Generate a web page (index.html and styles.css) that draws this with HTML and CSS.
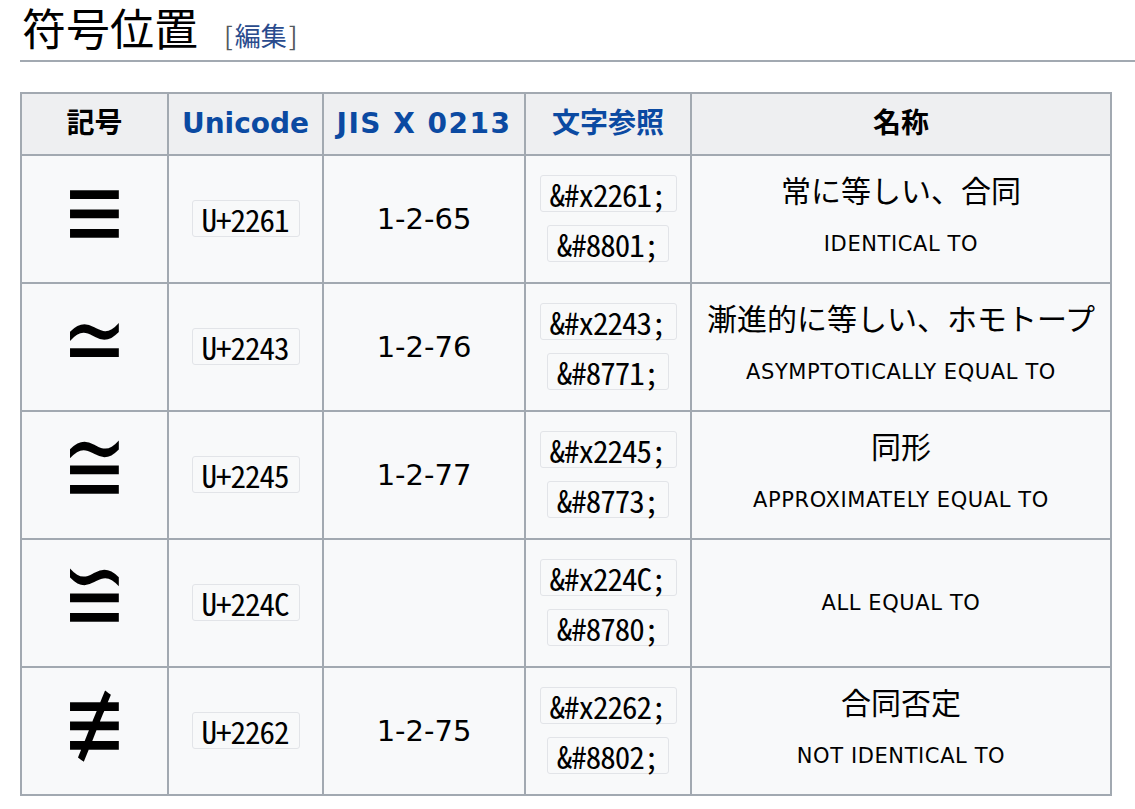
FILE: index.html
```html
<!DOCTYPE html>
<html lang="ja">
<head>
<meta charset="utf-8">
<title>符号位置</title>
<link rel="stylesheet" href="styles.css">
</head>
<body>
<div class="page">
  <h2 class="section-title"><span class="headline">符号位置</span><span class="editsection"><span class="bracket">[</span><a href="#">編集</a><span class="bracket">]</span></span></h2>
  <table class="wikitable">
    <colgroup>
      <col class="c1"><col class="c2"><col class="c3"><col class="c4"><col class="c5">
    </colgroup>
    <thead>
      <tr>
        <th>記号</th>
        <th><a href="#">Unicode</a></th>
        <th><a href="#" class="wide">JIS X 0213</a></th>
        <th><a href="#">文字参照</a></th>
        <th>名称</th>
      </tr>
    </thead>
    <tbody>
      <tr>
        <td class="sym"><span class="glyph">≡</span></td>
        <td class="uni"><code>U+2261</code></td>
        <td class="jis">1-2-65</td>
        <td class="refs"><code>&amp;#x2261;</code><br><code>&amp;#8801;</code></td>
        <td class="name"><div class="jp">常に等しい、合同</div><div class="en">IDENTICAL TO</div></td>
      </tr>
      <tr>
        <td class="sym"><span class="glyph">≃</span></td>
        <td class="uni"><code>U+2243</code></td>
        <td class="jis">1-2-76</td>
        <td class="refs"><code>&amp;#x2243;</code><br><code>&amp;#8771;</code></td>
        <td class="name"><div class="jp">漸進的に等しい、ホモトープ</div><div class="en">ASYMPTOTICALLY EQUAL TO</div></td>
      </tr>
      <tr>
        <td class="sym"><span class="glyph">≅</span></td>
        <td class="uni"><code>U+2245</code></td>
        <td class="jis">1-2-77</td>
        <td class="refs"><code>&amp;#x2245;</code><br><code>&amp;#8773;</code></td>
        <td class="name"><div class="jp">同形</div><div class="en">APPROXIMATELY EQUAL TO</div></td>
      </tr>
      <tr>
        <td class="sym"><span class="glyph">≌</span></td>
        <td class="uni"><code>U+224C</code></td>
        <td class="jis"></td>
        <td class="refs"><code>&amp;#x224C;</code><br><code>&amp;#8780;</code></td>
        <td class="name"><div class="en">ALL EQUAL TO</div></td>
      </tr>
      <tr>
        <td class="sym"><span class="glyph">≢</span></td>
        <td class="uni"><code>U+2262</code></td>
        <td class="jis">1-2-75</td>
        <td class="refs"><code>&amp;#x2262;</code><br><code>&amp;#8802;</code></td>
        <td class="name"><div class="jp">合同否定</div><div class="en">NOT IDENTICAL TO</div></td>
      </tr>
    </tbody>
  </table>
</div>
</body>
</html>
```

FILE: styles.css
```css
html, body {
  margin: 0;
  padding: 0;
  background: #ffffff;
}

body {
  font-family: "Noto Sans CJK JP", "Noto Sans", sans-serif;
  color: #202122;
}

.page {
  padding: 0 0 0 20px;
}

.section-title {
  margin: 0;
  padding: 0 0 6px 2px;
  font-size: 44px;
  font-weight: normal;
  line-height: 54px;
  border-bottom: 2px solid #a2a9b1;
  color: #000;
}

.editsection {
  font-size: 26px;
  line-height: 1;
  margin-left: 26px;
}

.editsection .bracket {
  color: #54595d;
}

.editsection a {
  color: #2a4b8d;
  text-decoration: none;
  padding: 0 2px;
}

.wikitable {
  margin-top: 30px;
  border-collapse: collapse;
  table-layout: fixed;
  width: 1092px;
  background: #f8f9fa;
  color: #000;
}

.c1 { width: 147px; }
.c2 { width: 155px; }
.c3 { width: 202px; }
.c4 { width: 166px; }
.c5 { width: 420px; }

.wikitable th,
.wikitable td {
  border: 2px solid #a2a9b1;
  text-align: center;
  vertical-align: middle;
  padding: 0;
}

.wikitable th {
  background: #eeeff1;
  font-family: "DejaVu Sans", "Noto Sans CJK JP", sans-serif;
  font-size: 28px;
  font-weight: bold;
  height: 60px;
  line-height: 40px;
}

.wikitable th a {
  color: #0b4aa2;
  text-decoration: none;
}

.wikitable th a.wide {
  letter-spacing: 1.5px;
}

.wikitable td {
  height: 126px;
  font-size: 29px;
}

.sym {
  line-height: 1;
}

.glyph {
  display: inline-block;
  font-family: "DejaVu Sans", sans-serif;
  font-size: 78px;
  line-height: 80px;
  transform: translateY(-4px) scaleY(1.35);
  margin-top: -8px;
}

.uni {
  line-height: 1;
}

.uni code {
  vertical-align: middle;
  margin-top: -4px;
}

.jis {
  font-family: "DejaVu Sans", sans-serif;
  font-size: 29px;
}

code {
  display: inline-block;
  font-family: "Noto Sans Mono CJK JP", "Liberation Mono", monospace;
  font-size: 31px;
  letter-spacing: -1px;
  line-height: 31px;
  padding: 2px 10px 2px 9px;
  background: #f8f9fa;
  border: 1px solid #e2e4e8;
  border-radius: 3px;
  color: #000;
}

.refs {
  line-height: 50px;
}

.name .jp {
  font-size: 30px;
  line-height: 50px;
}

.name .en {
  font-size: 21px;
  letter-spacing: 0.6px;
  line-height: 60px;
  font-family: "DejaVu Sans", "Noto Sans CJK JP", sans-serif;
}
```
